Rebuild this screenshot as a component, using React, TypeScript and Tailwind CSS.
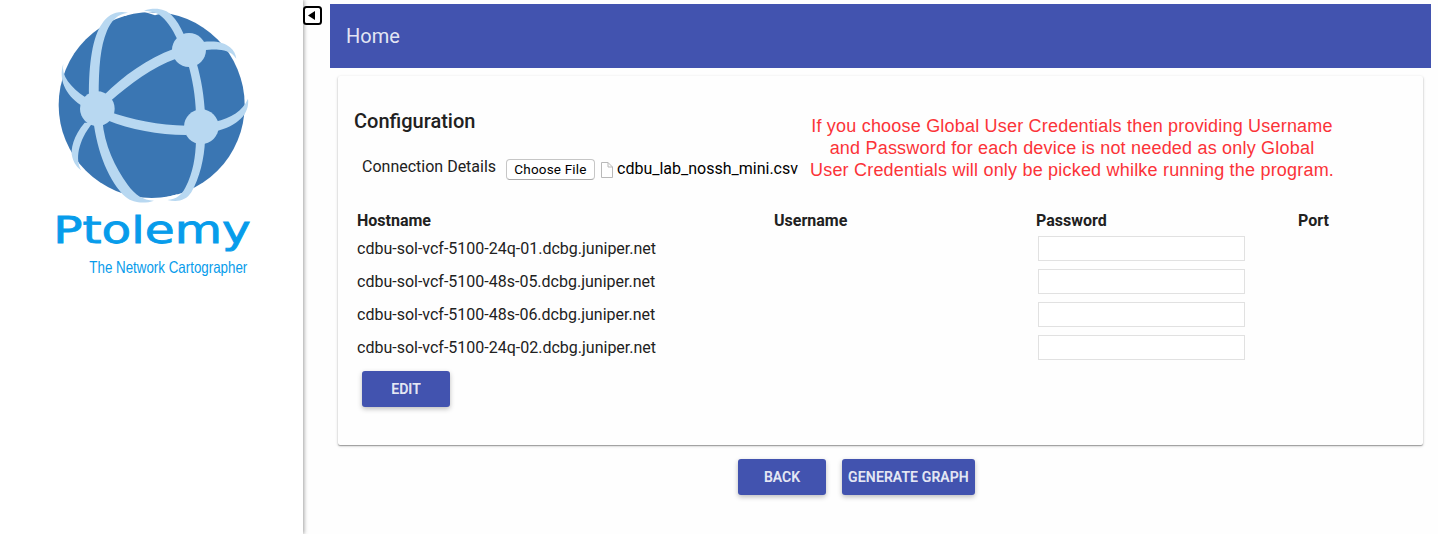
import React from "react";

const hosts = [
  "cdbu-sol-vcf-5100-24q-01.dcbg.juniper.net",
  "cdbu-sol-vcf-5100-48s-05.dcbg.juniper.net",
  "cdbu-sol-vcf-5100-48s-06.dcbg.juniper.net",
  "cdbu-sol-vcf-5100-24q-02.dcbg.juniper.net",
];

function Logo() {
  return (
    <svg className="ml-10 block h-[290px] w-[230px] overflow-visible" viewBox="0 0 690 870">
      <circle cx="335" cy="315" r="279" fill="#3a76b3" />
      <path d="M226 52L272 36L258 47ZM312 35L366 40L345 46ZM103 455L124 512L112 504ZM300 596L345 600L415 582L385 600Z" fill="#fff" />
      <g fill="#b8d8f1">
        <path d="M147 290C146 190 158 110 186 71C204 43 230 31 264 38C232 43 215 60 201 92C181 140 176 200 176 290Z" />
        <path d="M312 32C346 21 377 27 395 46C410 61 421 80 432 104L412 118C397 85 378 58 358 44C345 36 330 34 312 32Z" />
        <path d="M488 126C525 122 552 126 570 142C582 152 587 163 589 176C577 158 559 150 536 149C520 148 507 149 488 151Z" />
        <path d="M190 287C252 226 320 176 402 146L408 176C336 202 274 249 208 306Z" />
        <path d="M444 190L470 190C484 239 492 286 495 342L468 342C466 286 458 240 444 190Z" />
        <path d="M202 333C277 360 357 376 440 377L438 405C354 405 272 389 200 360Z" />
        <path d="M70 191C63 228 91 260 136 292L122 315C75 282 55 237 70 191Z" />
        <path d="M134 368C101 406 90 449 97 472C102 491 112 503 124 511C105 480 113 423 158 368Z" />
        <path d="M160 360L187 360C193 435 225 502 263 554C286 585 308 600 342 602C320 610 282 612 258 592C208 548 171 456 160 360Z" />
        <path d="M468 420L495 420C493 475 479 534 454 577C438 602 413 607 382 600C410 598 424 586 437 561C459 519 467 470 468 420Z" />
        <path d="M525 365C575 354 607 333 624 296C630 342 592 378 527 394Z" />
        <circle cx="447" cy="150" r="51" />
        <circle cx="172" cy="326" r="52" />
        <circle cx="484" cy="380" r="52" />
      </g>
      <text x="40" y="729" textLength="592" lengthAdjust="spacingAndGlyphs" fill="#079ceb" stroke="#079ceb" strokeWidth="2.5" fontFamily="DejaVu Sans, sans-serif" fontSize="112">Ptolemy</text>
      <text x="148" y="820" textLength="474" lengthAdjust="spacingAndGlyphs" fill="#079ceb" fontFamily="Liberation Sans, sans-serif" fontSize="47">The Network Cartographer</text>
    </svg>
  );
}

function ActionButton({ label, wide = false }: { label: string; wide?: boolean }) {
  return (
    <button className={`${wide ? "w-[133px] tracking-[0.13px]" : "w-[88px]"} h-9 rounded-[3px] bg-[#4253af] text-sm font-medium whitespace-nowrap text-white/87 shadow-[0_2px_5px_rgba(0,0,0,0.26)]`}>
      <span className="[-webkit-text-stroke:0.2px_currentColor]">{label}</span>
    </button>
  );
}

export default function App() {
  return (
    <div className="flex h-[534px] w-[1438px] overflow-hidden bg-[#fefefe] font-['Roboto',sans-serif] text-base text-[#212121]">
      <aside className="w-[303px] shrink-0 bg-white shadow-[1px_0_4px_rgba(0,0,0,0.38)]">
        <Logo />
      </aside>
      <div className="w-[27px] shrink-0 pt-[6px]">
        <svg className="block h-[19px] w-[19px]" viewBox="0 0 19 19">
          <rect x="1" y="1" width="17" height="17" rx="2.5" fill="#fff" stroke="#000" strokeWidth="2" />
          <path d="M5 9.5L12 5V14Z" fill="#000" />
        </svg>
      </div>
      <main className="flex w-[1101px] shrink-0 flex-col pt-1">
        <header className="flex h-16 shrink-0 items-center bg-[#4253af] px-4 text-xl text-white/87">Home</header>
        <section className="mx-2 mt-2 h-[369px] shrink-0 rounded-[2px] bg-[#fefefe] px-4 shadow-[0_1px_3px_rgba(0,0,0,0.22),0_1px_1px_rgba(0,0,0,0.28)]">
          <div className="flex h-[134px]">
            <div className="w-[456px] shrink-0 pt-[31px]">
              <h1 className="text-xl leading-7 font-medium">Configuration</h1>
              <div className="mt-5 flex pl-2">
                <span className="w-[144px] shrink-0 leading-6">Connection Details</span>
                <button className="mt-[4px] h-[21px] w-[89px] shrink-0 rounded-[4px] border border-[#c6c6c6] border-b-[#aaa] bg-white text-[13.5px] leading-[18px] tracking-[0.18px] whitespace-nowrap text-black"><span className="relative -top-px">Choose File</span></button>
                <svg className="mt-[7px] ml-[6px] h-4 w-3 shrink-0" viewBox="0 0 12 16">
                  <path d="M.5.5H7L11.5 5V15.5H.5ZM7 .5V5H11.5" fill="#fff" stroke="#b9b9b9" />
                </svg>
                <span className="ml-1 pt-[2px] leading-6 whitespace-nowrap text-black">cdbu_lab_nossh_mini.csv</span>
              </div>
            </div>
            <p className="w-[524px] shrink-0 pt-[39px] text-center font-['Liberation_Sans',sans-serif] text-[18px] leading-[22px] tracking-[0.2px] whitespace-nowrap text-[#fb3338]">
              If you choose Global User Credentials then providing Username<br />
              and Password for each device is not needed as only Global<br />
              User Credentials will only be picked whilke running the program.
            </p>
          </div>
          <div className="ml-[3px] grid grid-cols-[417px_262px_262px_100px] pt-[1px] leading-[19px] font-bold">
            <span>Hostname</span>
            <span>Username</span>
            <span>Password</span>
            <span>Port</span>
          </div>
          <div className="mt-[2px] ml-[3px]">
            {hosts.map((host) => (
              <div key={host} className="grid h-[33px] grid-cols-[417px_262px_262px_100px]">
                <span className="pt-[5px] leading-[24px]">{host}</span>
                <span />
                <input aria-label="Password" type="password" className="mt-[4px] ml-[2px] h-[25px] w-[207px] border border-[#e1e1e1] bg-white" />
                <span />
              </div>
            ))}
          </div>
          <div className="mt-[7px] ml-2"><ActionButton label="EDIT" /></div>
        </section>
        <div className="mt-[14px] ml-[408px] flex gap-4">
          <ActionButton label="BACK" />
          <ActionButton label="GENERATE GRAPH" wide />
        </div>
      </main>
    </div>
  );
}
